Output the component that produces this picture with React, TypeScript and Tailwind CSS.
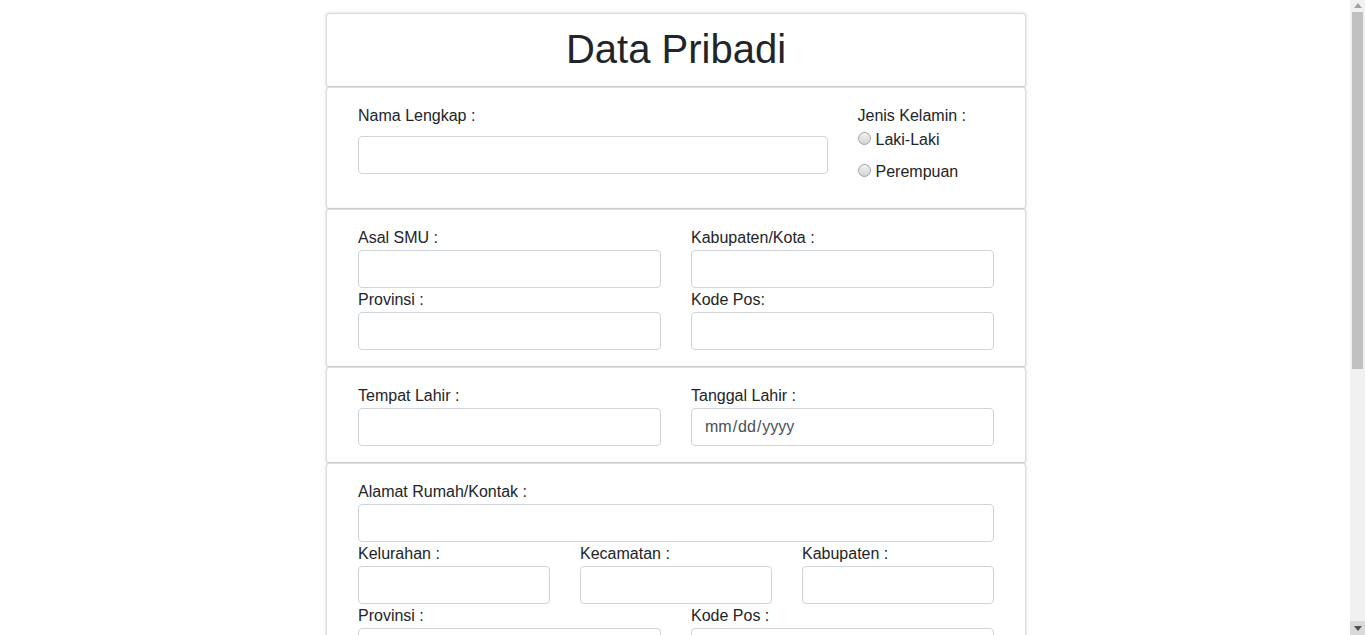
const font = { fontFamily: '"Liberation Sans", Arial, sans-serif' };

const inputClass =
  'block w-full h-[38px] px-3 rounded-[4px] border border-[#ced4da] bg-white text-[16px] text-[#495057] outline-none';

const cardClass =
  'bg-white border border-[#dcdcdc] rounded-[3px] shadow-[0_0_3px_rgba(0,0,0,0.18)] px-[31px]';

const Field = ({ label, type = 'text' }: { label: string; type?: string }) => (
  <div>
    <label className="block leading-6">{label}</label>
    <input
      type={type}
      className={`${inputClass} [&::-webkit-calendar-picker-indicator]:hidden`}
    />
  </div>
);

const Radio = ({ label }: { label: string }) => (
  <label className="flex items-start leading-6">
    <span className="mt-[4px] mr-[5px] h-[13px] w-[13px] shrink-0 rounded-full border border-[#a3a3a3] bg-gradient-to-b from-[#f2f2f2] to-[#d4d4d4]" />
    <span>{label}</span>
  </label>
);

// scrollbar ala browser lama
const ScrollBar = () => (
  <div className="fixed top-0 right-0 h-screen w-[15px] bg-[#f1f1f1] flex flex-col">
    <div className="h-[12px] flex items-start justify-center pt-[3px]">
      <svg width="8" height="5" viewBox="0 0 8 5">
        <path d="M4 0 L8 5 L0 5 Z" fill="#a3a3a3" />
      </svg>
    </div>
    <div className="h-[357px] mx-[2px] bg-[#c1c1c1]" />
    <div className="flex-1" />
    <div className="h-[14px] bg-[#dadada] flex items-center justify-center">
      <svg width="8" height="5" viewBox="0 0 8 5">
        <path d="M0 0 L8 0 L4 5 Z" fill="#505050" />
      </svg>
    </div>
  </div>
);

const App = () => {
  return (
    <div className="min-h-screen bg-white text-[16px] text-[#212529] pr-[13px]" style={font}>
      <div className="mx-auto w-[700px] pt-[13px] pb-10">
        {/* judul */}
        <div className={`${cardClass} pt-[11px] pb-[13px]`}>
          <h1 className="text-center text-[40px] leading-[48px] font-normal">Data Pribadi</h1>
        </div>

        {/* nama & jenis kelamin */}
        <div className={`${cardClass} pt-4 pb-6`}>
          <div className="grid grid-cols-[1fr_136.5px] gap-x-[30px] items-start">
            <div>
              <label className="block leading-6 mb-2">Nama Lengkap :</label>
              <input type="text" className={inputClass} />
            </div>
            <div>
              <div className="leading-6">Jenis Kelamin :</div>
              <div className="flex flex-col gap-2">
                <Radio label="Laki-Laki" />
                <Radio label="Perempuan" />
              </div>
            </div>
          </div>
        </div>

        {/* sekolah */}
        <div className={`${cardClass} py-4`}>
          <div className="grid grid-cols-2 gap-x-[30px]">
            <Field label="Asal SMU :" />
            <Field label="Kabupaten/Kota :" />
            <Field label="Provinsi :" />
            <Field label="Kode Pos:" />
          </div>
        </div>

        {/* kelahiran */}
        <div className={`${cardClass} py-4`}>
          <div className="grid grid-cols-2 gap-x-[30px]">
            <Field label="Tempat Lahir :" />
            <Field label="Tanggal Lahir :" type="date" />
          </div>
        </div>

        {/* alamat */}
        <div className={`${cardClass} py-4`}>
          <Field label="Alamat Rumah/Kontak :" />
          <div className="grid grid-cols-3 gap-x-[30px]">
            <Field label="Kelurahan :" />
            <Field label="Kecamatan :" />
            <Field label="Kabupaten :" />
          </div>
          <div className="grid grid-cols-2 gap-x-[30px]">
            <Field label="Provinsi :" />
            <Field label="Kode Pos :" />
          </div>
        </div>
      </div>
      <ScrollBar />
    </div>
  );
};

export default App;
